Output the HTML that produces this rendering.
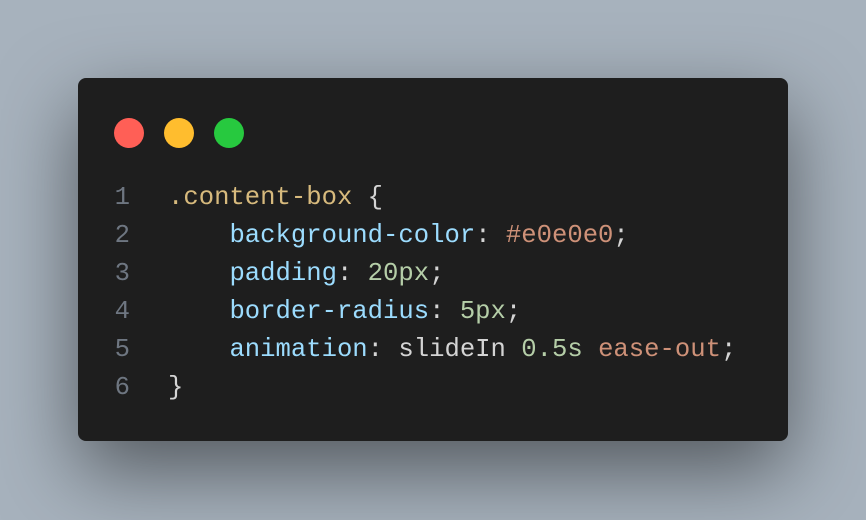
<!DOCTYPE html>
<html><head><style>
html,body{margin:0;padding:0;}
body{width:866px;height:520px;background:#a7b2bd;position:relative;overflow:hidden;}
.card{position:absolute;left:78px;top:78px;width:710px;height:363px;background:#1e1e1e;border-radius:8px;box-shadow:0 30px 80px rgba(0,0,0,0.5);}
.dot{position:absolute;top:40px;width:30px;height:30px;border-radius:50%;}
.code{position:absolute;left:0;top:101px;font-family:"Liberation Mono",monospace;font-size:25.6px;line-height:38px;color:#d4d4d4;white-space:pre;}
.ln{display:inline-block;width:52px;text-align:right;color:#6e7681;margin-right:38px;}
.s{color:#d7ba7d}.p{color:#9cdcfe}.v{color:#ce9178}.n{color:#b5cea8}
</style></head><body>
<div class="card">
<div class="dot" style="left:36px;background:#ff5f56"></div>
<div class="dot" style="left:86px;background:#ffbd2e"></div>
<div class="dot" style="left:136px;background:#27c93f"></div>
<div class="code"><div><span class="ln">1</span><span class="s">.content-box</span> {</div><div><span class="ln">2</span>    <span class="p">background-color</span>: <span class="v">#e0e0e0</span>;</div><div><span class="ln">3</span>    <span class="p">padding</span>: <span class="n">20px</span>;</div><div><span class="ln">4</span>    <span class="p">border-radius</span>: <span class="n">5px</span>;</div><div><span class="ln">5</span>    <span class="p">animation</span>: slideIn <span class="n">0.5s</span> <span class="v">ease-out</span>;</div><div><span class="ln">6</span>}</div></div>
</div>
</body></html>
